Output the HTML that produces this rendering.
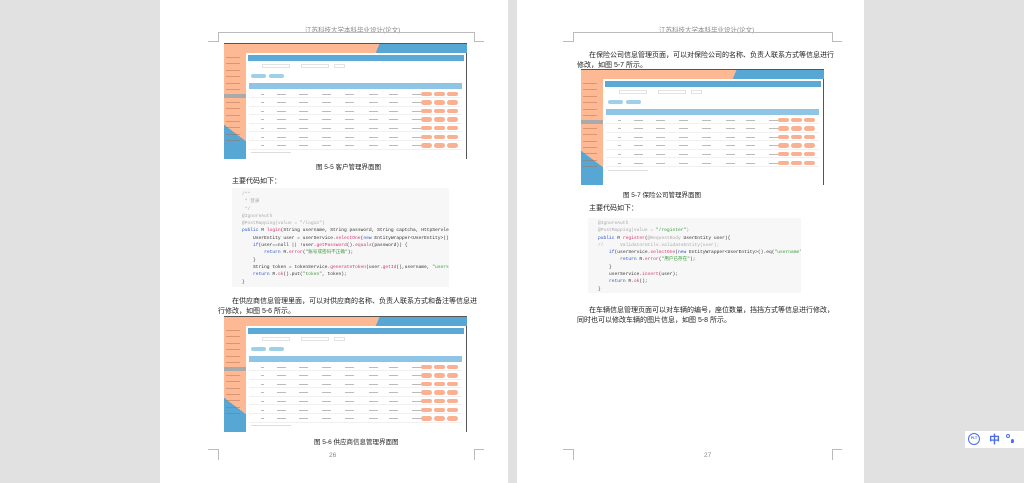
<!DOCTYPE html>
<html><head><meta charset="utf-8"><style>
*{margin:0;padding:0;box-sizing:border-box}
body{width:1024px;height:483px;background:#e1e1e1;position:relative;overflow:hidden;font-family:"Liberation Sans","Noto Sans CJK SC",sans-serif}
.page{position:absolute;top:0;height:483px;background:#fff}
.a{position:absolute}
.hl{position:absolute;height:1px;background:#bbb}
.vl{position:absolute;width:1px;background:#bbb}
.t{position:absolute;font-size:7px;color:#222;white-space:nowrap}
.hdr{position:absolute;font-size:6.5px;color:#888;white-space:nowrap}
.mock{position:absolute;width:243px;height:116px;background:#fff;overflow:hidden}
.mock .top{position:absolute;left:0;top:0;width:243px;height:10px;border-top:1.5px solid #555;background:linear-gradient(112deg,#fdb894 63%,#56a7d4 63%)}
.mock .side{position:absolute;left:0;top:10px;width:22px;height:106px;background:linear-gradient(217deg,#fdb894 72%,#56a7d4 72%)}
.mock .mi{position:absolute;left:2px;width:14px;height:1px;background:#b06a4a;opacity:.45}
.mock .sel{position:absolute;left:0;width:22px;height:4px;background:#aaa}
.mock .bar{position:absolute;left:24px;top:12px;width:216px;height:6px;background:#5aa9d6}
.mock .in{position:absolute;height:4px;border:0.5px solid #e3e3e3}
.mock .bt{position:absolute;top:31px;width:15px;height:4px;background:#9fd0ea;border-radius:2px}
.mock .th{position:absolute;left:25px;top:40px;width:213px;height:6px;background:#8ec5e4}
.mock .row{position:absolute;left:25px;width:213px;height:8px;border-bottom:0.5px solid #f0f0f0}
.mock .c{position:absolute;top:3.5px;height:0.7px;background:#bbb;width:10px}
.mock .p{position:absolute;top:1.5px;width:11px;height:4.5px;background:#f9b192;border-radius:3px}
.mock .rb{position:absolute;right:0;top:10px;width:1.5px;height:106px;background:#555}
.code{position:absolute;background:#f7f7f7;font-family:"Liberation Mono","Noto Sans CJK SC",monospace;font-size:4.6px;line-height:7.3px;color:#333;white-space:pre;padding:3px 0 0 10px;overflow:hidden}
.g{color:#aaa}.b{color:#2a55c8}.r{color:#d6336c}.s{color:#3a9a3a}
</style></head><body>

<div class="page" style="left:160px;width:348px">
  <div class="hdr" style="left:145px;top:24px">江苏科技大学本科毕业设计(论文)</div>
  <div class="hl" style="left:58px;top:32px;width:256px"></div>
  <div class="vl" style="left:58px;top:32px;height:10px"></div>
  <div class="hl" style="left:48px;top:41px;width:10px"></div>
  <div class="vl" style="left:314px;top:32px;height:10px"></div>
  <div class="hl" style="left:314px;top:41px;width:10px"></div>
  <div class="hl" style="left:48px;top:449px;width:10px"></div>
  <div class="vl" style="left:58px;top:449px;height:11px"></div>
  <div class="hl" style="left:314px;top:449px;width:10px"></div>
  <div class="vl" style="left:314px;top:449px;height:11px"></div>
  <div class="hdr" style="left:169px;top:452px">26</div>
  <div class="t" style="left:156px;top:161px;font-size:6.5px">图 5-5 客户管理界面图</div>
  <div class="t" style="left:72px;top:176px">主要代码如下：</div>
  <div class="t" style="left:72px;top:296px">在供应商信息管理里面，可以对供应商的名称、负责人联系方式和备注等信息进</div>
  <div class="t" style="left:58px;top:306px">行修改，如图 5-6 所示。</div>
  <div class="t" style="left:154px;top:436px;font-size:6.5px">图 5-6 供应商信息管理界面图</div>
</div>

<div class="page" style="left:517px;width:347px">
  <div class="hdr" style="left:142px;top:24px">江苏科技大学本科毕业设计(论文)</div>
  <div class="hl" style="left:56px;top:32px;width:259px"></div>
  <div class="vl" style="left:56px;top:32px;height:10px"></div>
  <div class="hl" style="left:46px;top:41px;width:10px"></div>
  <div class="vl" style="left:315px;top:32px;height:10px"></div>
  <div class="hl" style="left:315px;top:41px;width:10px"></div>
  <div class="hl" style="left:46px;top:449px;width:10px"></div>
  <div class="vl" style="left:56px;top:449px;height:11px"></div>
  <div class="hl" style="left:315px;top:449px;width:10px"></div>
  <div class="vl" style="left:315px;top:449px;height:11px"></div>
  <div class="hdr" style="left:187px;top:452px">27</div>
  <div class="t" style="left:72px;top:50px">在保险公司信息管理页面，可以对保险公司的名称、负责人联系方式等信息进行</div>
  <div class="t" style="left:60px;top:60px">修改，如图 5-7 所示。</div>
  <div class="t" style="left:106px;top:189px;font-size:6.5px">图 5-7 保险公司管理界面图</div>
  <div class="t" style="left:72px;top:203px">主要代码如下：</div>
  <div class="t" style="left:72px;top:305px">在车辆信息管理页面可以对车辆的编号，座位数量，挡挡方式等信息进行修改，</div>
  <div class="t" style="left:60px;top:315px">同时也可以修改车辆的图片信息，如图 5-8 所示。</div>
</div>

<div class="code" style="left:232px;top:188px;width:217px;height:99px"><span class="g">/**
 * 登录
 */
@IgnoreAuth
@PostMapping(value = "/login")</span>
<span class="b">public</span> R <span class="r">login</span>(String username, String password, String captcha, HttpServletReq
    UserEntity user = userService.<span class="r">selectOne</span>(<span class="b">new</span> EntityWrapper&lt;UserEntity&gt;().eq(
    <span class="b">if</span>(user==null || !user.<span class="r">getPassword</span>().<span class="r">equals</span>(password)) {
        <span class="b">return</span> R.<span class="r">error</span>(<span class="s">"账号或密码不正确"</span>);
    }
    String token = tokenService.<span class="r">generateToken</span>(user.<span class="r">getId</span>(),username, <span class="s">"users"</span>, u
    <span class="b">return</span> R.<span class="r">ok</span>().put(<span class="s">"token"</span>, token);
}</div>
<div class="code" style="left:588px;top:218px;width:213px;height:75px;padding-top:2px"><span class="g">@IgnoreAuth
@PostMapping(value = <span class="s">"/register"</span>)</span>
<span class="b">public</span> R <span class="r">register</span>(<span class="g">@RequestBody</span> UserEntity user){
<span class="g">//      ValidatorUtils.validateEntity(user);</span>
    <span class="b">if</span>(userService.<span class="r">selectOne</span>(<span class="b">new</span> EntityWrapper&lt;UserEntity&gt;().eq(<span class="s">"username"</span>, use
        <span class="b">return</span> R.<span class="r">error</span>(<span class="s">"用户已存在"</span>);
    }
    userService.<span class="r">insert</span>(user);
    <span class="b">return</span> R.<span class="r">ok</span>();
}</div>

<div class="mock" style="left:224px;top:43px" id="m1"></div>
<div class="mock" style="left:224px;top:316px" id="m2"></div>
<div class="mock" style="left:581px;top:69px;height:118px" id="m3"></div>

<div class="a" style="left:965px;top:431px;width:59px;height:17px;background:#fff"></div>
<div class="a" style="left:968px;top:433px;width:12px;height:12px;border:1.5px solid #4a6cf0;border-radius:50%;font-size:3.5px;color:#4a6cf0;text-align:center;line-height:9px;font-weight:bold">PLT</div>
<div class="a" style="left:989px;top:432px;font-size:11px;color:#4a6cf0;font-weight:bold;font-family:'Noto Sans CJK SC',sans-serif;line-height:14px">中</div>
<div class="a" style="left:1006px;top:434px;width:4px;height:4px;border:1.2px solid #4a6cf0;border-radius:50%"></div>
<div class="a" style="left:1011px;top:439px;width:3px;height:4px;background:#4a6cf0;border-radius:50% 50% 50% 0"></div>

<script>
function build(el,rows){
  let h='<div class="top"></div><div class="side">';
  for(let i=0;i<14;i++){ if(i==6) h+='<div class="sel" style="top:'+(3+i*6.4)+'px"></div>'; else h+='<div class="mi" style="top:'+(4+i*6.4)+'px"></div>'; }
  h+='</div><div class="rb"></div><div class="bar"></div>';
  h+='<div class="in" style="left:38px;top:21px;width:28px"></div><div class="in" style="left:77px;top:21px;width:28px"></div><div class="in" style="left:110px;top:21px;width:11px"></div>';
  h+='<div class="bt" style="left:27px"></div><div class="bt" style="left:45px"></div><div class="th"></div>';
  for(let r=0;r<rows;r++){
    h+='<div class="row" style="top:'+(47+r*8.6)+'px">';
    [4,20,42,65,88,112,132,155].forEach((x,i)=>{h+='<div class="c" style="left:'+(x+8)+'px;width:'+(i<1?3:9)+'px"></div>'});
    h+='<div class="p" style="left:172px"></div><div class="p" style="left:185px"></div><div class="p" style="left:198px"></div></div>';
  }
  h+='<div class="c" style="left:27px;top:'+(49+rows*8.6)+'px;width:40px;background:#ddd"></div>';
  el.innerHTML=h;
}
build(document.getElementById('m1'),7);
build(document.getElementById('m2'),7);
build(document.getElementById('m3'),6);
</script>
</body></html>
